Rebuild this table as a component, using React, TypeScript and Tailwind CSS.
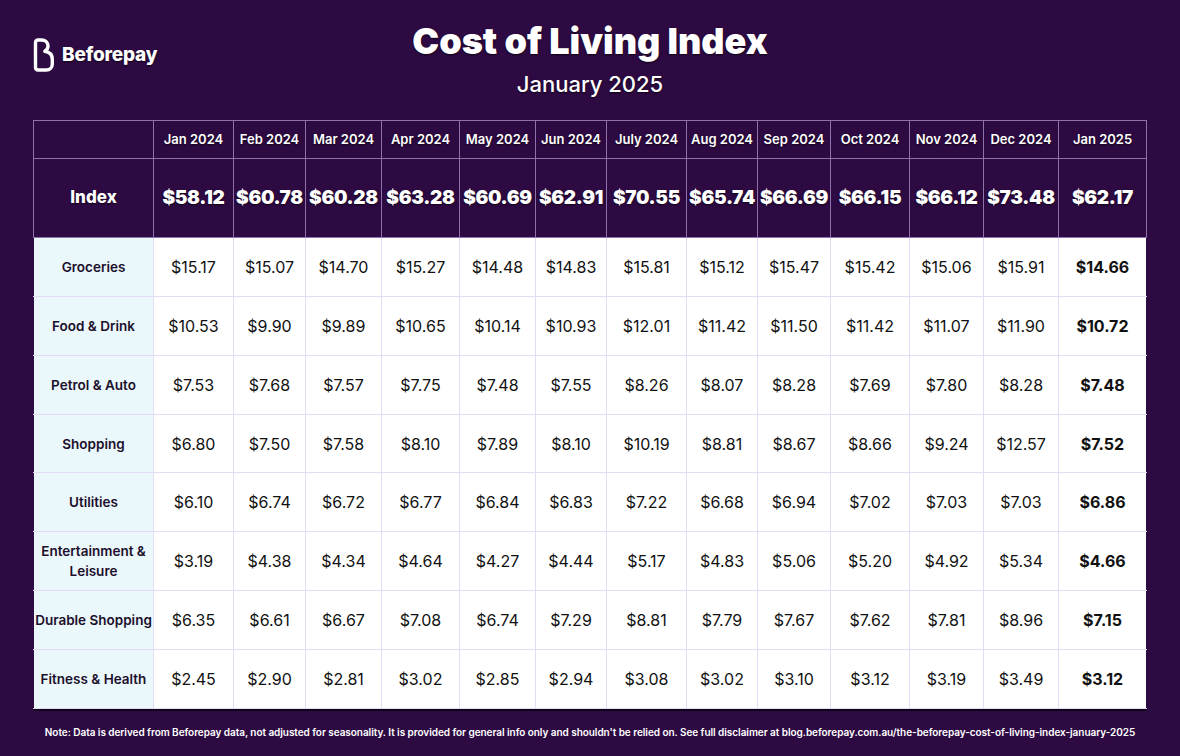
import React from "react";

const months = ["Jan 2024","Feb 2024","Mar 2024","Apr 2024","May 2024","Jun 2024","July 2024","Aug 2024","Sep 2024","Oct 2024","Nov 2024","Dec 2024","Jan 2025"];
const widths = [80,72,76,78,76,71,80,71,73,79,74,75,88];
const index = ["$58.12","$60.78","$60.28","$63.28","$60.69","$62.91","$70.55","$65.74","$66.69","$66.15","$66.12","$73.48","$62.17"];
const rows: [string, string[]][] = [
  ["Groceries", ["$15.17","$15.07","$14.70","$15.27","$14.48","$14.83","$15.81","$15.12","$15.47","$15.42","$15.06","$15.91","$14.66"]],
  ["Food & Drink", ["$10.53","$9.90","$9.89","$10.65","$10.14","$10.93","$12.01","$11.42","$11.50","$11.42","$11.07","$11.90","$10.72"]],
  ["Petrol & Auto", ["$7.53","$7.68","$7.57","$7.75","$7.48","$7.55","$8.26","$8.07","$8.28","$7.69","$7.80","$8.28","$7.48"]],
  ["Shopping", ["$6.80","$7.50","$7.58","$8.10","$7.89","$8.10","$10.19","$8.81","$8.67","$8.66","$9.24","$12.57","$7.52"]],
  ["Utilities", ["$6.10","$6.74","$6.72","$6.77","$6.84","$6.83","$7.22","$6.68","$6.94","$7.02","$7.03","$7.03","$6.86"]],
  ["Entertainment & Leisure", ["$3.19","$4.38","$4.34","$4.64","$4.27","$4.44","$5.17","$4.83","$5.06","$5.20","$4.92","$5.34","$4.66"]],
  ["Durable Shopping", ["$6.35","$6.61","$6.67","$7.08","$6.74","$7.29","$8.81","$7.79","$7.67","$7.62","$7.81","$8.96","$7.15"]],
  ["Fitness & Health", ["$2.45","$2.90","$2.81","$3.02","$2.85","$2.94","$3.08","$3.02","$3.10","$3.12","$3.19","$3.49","$3.12"]],
];
const rowH = [59, 59, 59, 58, 59, 59, 59, 59];

function Logo() {
  return (
    <svg width="22" height="34" viewBox="0 0 22 34" fill="none">
      <path
        d="M2.5 4.5 C2.5 3 3.5 2 5 2 H8.5 C12.5 2 15 4.5 15 8 C15 10.5 13.6 12.3 11.8 13.3 C16.3 14 19.3 17 19.3 21.5 V26 C19.3 29.5 16.8 32 13.3 32 H5 C3.5 32 2.5 31 2.5 29.5 Z"
        stroke="white"
        strokeWidth="3.4"
        strokeLinejoin="round"
      />
    </svg>
  );
}

export default function App() {
  const shadow = "[text-shadow:0_1px_2px_rgba(0,0,0,0.7)]";
  return (
    <div className="w-[1180px] h-[756px] bg-[#2e0a43] overflow-hidden relative" style={{ fontFamily: "Inter, 'Liberation Sans', sans-serif" }}>
      <div className="absolute left-[33px] top-[38px] flex items-center gap-[7px]">
        <Logo />
        <span className={`text-white text-[19px] font-extrabold tracking-[-0.2px] ${shadow}`}>Beforepay</span>
      </div>
      <div className="flex flex-col items-center pt-[19px]">
        <h1 className={`text-white text-[36px] leading-[44px] font-black tracking-normal ${shadow}`}>Cost of Living Index</h1>
        <div className={`text-white text-[22px] leading-[28px] font-medium mt-[7px] ${shadow}`}>January 2025</div>
      </div>
      <div className="ml-[33px] mt-[22px] w-[1113px]">
        <table className="table-fixed border-collapse w-[1113px] shadow-[0_2px_0_#120418]">
          <colgroup>
            <col style={{ width: 120 }} />
            {widths.map((w, i) => (
              <col key={i} style={{ width: w }} />
            ))}
          </colgroup>
          <thead>
            <tr className="h-[38px]">
              <th className="border border-[#8e72ab] bg-[#2e0a43]"></th>
              {months.map((m) => (
                <th key={m} className={`border border-[#8e72ab] bg-[#2e0a43] text-white text-[13px] font-semibold whitespace-nowrap ${shadow}`}>{m}</th>
              ))}
            </tr>
            <tr className="h-[79px]">
              <th className={`border border-[#8e72ab] bg-[#2e0a43] text-white text-[17px] font-extrabold ${shadow}`}>Index</th>
              {index.map((v, i) => (
                <th key={i} className={`border border-[#8e72ab] bg-[#2e0a43] text-white text-[19px] font-black tracking-[-0.3px] whitespace-nowrap ${shadow}`}>{v}</th>
              ))}
            </tr>
          </thead>
          <tbody>
            {rows.map(([label, vals], ri) => (
              <tr key={label} style={{ height: rowH[ri] }}>
                <td className="border border-[#e4dcf4] border-l-[#2e0a43] bg-[#eaf7fb] text-center text-[13.5px] font-semibold leading-[20px] text-[#1c0f2b] px-0">
                  {label === "Entertainment & Leisure" ? (<>Entertainment &amp;<br />Leisure</>) : label}
                </td>
                {vals.map((v, i) => (
                  <td
                    key={i}
                    className={`border border-[#e4dcf4] bg-white text-center text-[16px] text-[#111] ${i === 12 ? "font-bold border-r-[#2e0a43]" : "font-normal"}`}
                  >
                    {v}
                  </td>
                ))}
              </tr>
            ))}
          </tbody>
        </table>
      </div>
      <div className="absolute left-0 right-0 top-[725px] text-center text-white text-[10px] font-semibold tracking-[-0.05px]">
        Note: Data is derived from Beforepay data, not adjusted for seasonality. It is provided for general info only and shouldn't be relied on. See full disclaimer at blog.beforepay.com.au/the-beforepay-cost-of-living-index-january-2025
      </div>
    </div>
  );
}
